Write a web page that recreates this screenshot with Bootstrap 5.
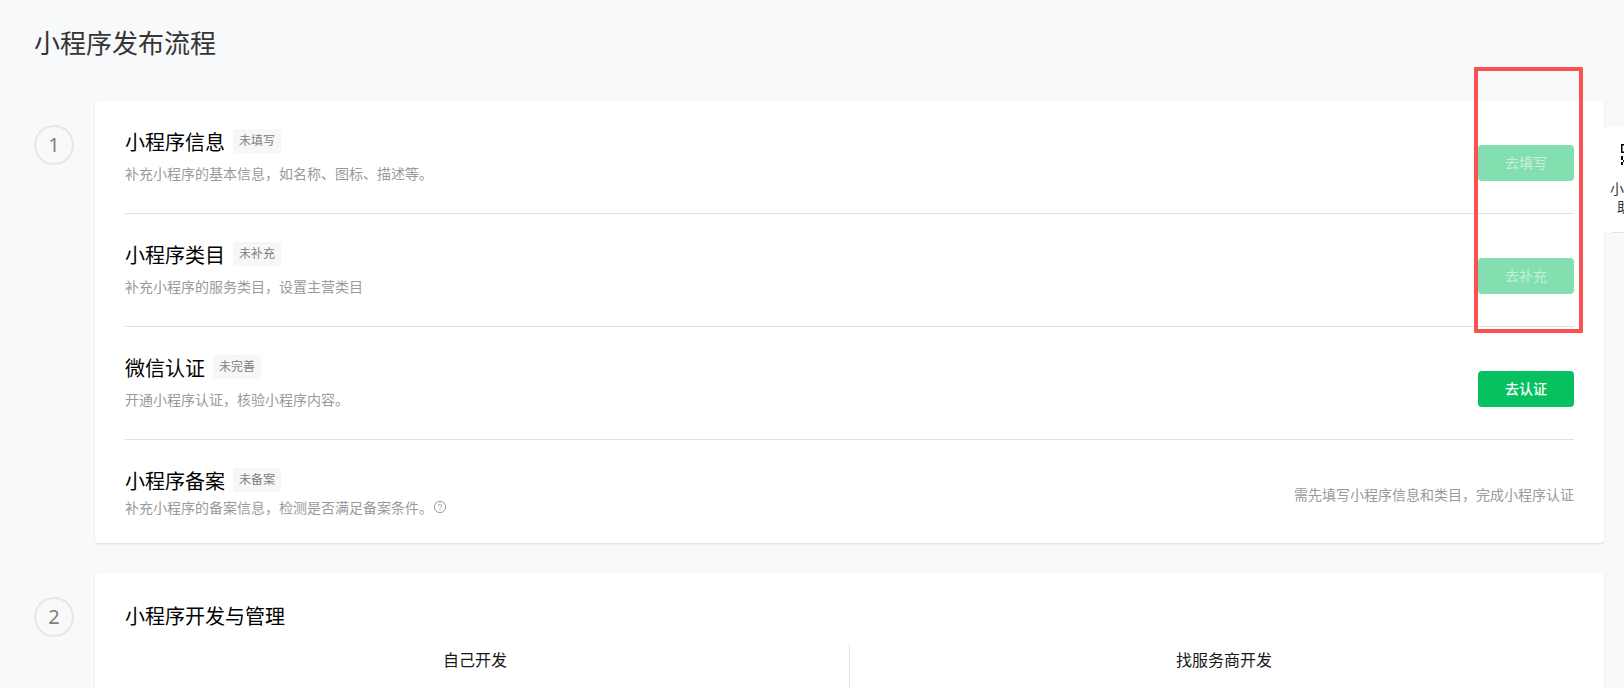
<!DOCTYPE html>
<html lang="zh-CN">
<head>
<meta charset="utf-8">
<meta name="viewport" content="width=device-width, initial-scale=1">
<title>小程序发布流程</title>
<link href="https://cdn.jsdelivr.net/npm/bootstrap@5.3.0/dist/css/bootstrap.min.css" rel="stylesheet">
<style>
  body { background: #f8f9fb; color: #000; font: 14px/20px "Noto Sans CJK SC", sans-serif; }
  .page { padding: 24px 20px 0 34px; }
  .page-title { font-size: 26px; line-height: 36px; color: #353535; font-weight: 400; margin: 0 0 41px; }
  .step { gap: 21px; }
  .step + .step { margin-top: 30px; }
  .step-num { width: 40px; height: 40px; margin-top: 24px; border: 2px solid #e7e7e8; color: #7d7e80; font: 20px/24px "Noto Sans", sans-serif; }
  .panel { min-width: 0; background: #fff; border-radius: 4px; box-shadow: 0 1px 2px rgba(0,0,0,.12); padding: 0 30px; }
  .task { height: 113px; padding-top: 27px; border-bottom: 1px solid #e0e2e3; }
  .task-last { height: 103px; border-bottom: 0; }
  .task-title { font-size: 20px; line-height: 28px; font-weight: 400; margin: 0; }
  .tag { font-size: 12px; line-height: 22px; margin-top: 1px; padding: 0 6px 2px; background: #f6f7f9; color: #7e8081; border-radius: 2px; }
  .hint { color: #9a9a9a; }
  .task .hint-row { margin-top: 7px; }
  .task-last .hint-row { margin-top: 2px; }
  .btn-go { --bs-btn-color: #fff; --bs-btn-bg: #07c160; --bs-btn-border-width: 0; --bs-btn-hover-color: #fff; --bs-btn-hover-bg: #06ad56; --bs-btn-active-bg: #06ad56; --bs-btn-active-color: #fff;
    --bs-btn-disabled-color: #c5f0d8; --bs-btn-disabled-bg: #83dfaf; --bs-btn-disabled-opacity: 1;
    width: 96px; height: 36px; padding: 0 0 2px; font-size: 14px; font-weight: 500; border-radius: 4px; margin-top: 17px; }
  .btn-go:disabled { font-weight: 400; }
  .note { margin-top: 17px; }
  .highlight { position: absolute; top: -34px; right: 21px; width: 109px; height: 266px; border: 4px solid #fa5151; border-radius: 1px; pointer-events: none; }
  .dev-title { padding-top: 29px; }
  .dev { margin-top: 15px; gap: 24px; min-height: 43px; }
  .dev-col { font-size: 16px; line-height: 28px; color: #181818; }
  .dev-line { width: 1px; background: #e0e2e3; }
  .helper { position: fixed; top: 127px; right: -34px; width: 54px; height: 106px; padding: 17px 0 0; background: #fff; color: #353535; line-height: 18px; text-decoration: none; }
  .helper svg { margin-bottom: 14px; }
  .helper-rule { height: 1px; margin: 17px 8px 0; background: #e0e2e3; }
</style>
</head>
<body>
<main class="page min-vh-100 d-flex flex-column">
  <h1 class="page-title">小程序发布流程</h1>

  <section class="step d-flex align-items-start">
    <div class="step-num rounded-circle flex-shrink-0 d-flex align-items-center justify-content-center">1</div>
    <div class="panel flex-grow-1 position-relative">
      <div class="task d-flex justify-content-between">
        <div>
          <div class="d-flex align-items-start gap-2"><h2 class="task-title">小程序信息</h2><span class="tag">未填写</span></div>
          <div class="hint hint-row">补充小程序的基本信息，如名称、图标、描述等。</div>
        </div>
        <button type="button" class="btn btn-go" disabled>去填写</button>
      </div>
      <div class="task d-flex justify-content-between">
        <div>
          <div class="d-flex align-items-start gap-2"><h2 class="task-title">小程序类目</h2><span class="tag">未补充</span></div>
          <div class="hint hint-row">补充小程序的服务类目，设置主营类目</div>
        </div>
        <button type="button" class="btn btn-go" disabled>去补充</button>
      </div>
      <div class="task d-flex justify-content-between">
        <div>
          <div class="d-flex align-items-start gap-2"><h2 class="task-title">微信认证</h2><span class="tag">未完善</span></div>
          <div class="hint hint-row">开通小程序认证，核验小程序内容。</div>
        </div>
        <button type="button" class="btn btn-go">去认证</button>
      </div>
      <div class="task task-last d-flex justify-content-between">
        <div>
          <div class="d-flex align-items-start gap-2"><h2 class="task-title">小程序备案</h2><span class="tag">未备案</span></div>
          <div class="hint hint-row d-flex align-items-center">补充小程序的备案信息，检测是否满足备案条件。
            <svg width="14" height="14" viewBox="0 0 14 14" fill="none" stroke="#9a9a9a" aria-hidden="true"><circle cx="7" cy="7" r="5.6"/><path d="M5.4 5.9a1.6 1.6 0 1 1 2.5 1.2c-.6.4-.9.6-.9 1.2M7 9.2v1"/></svg>
          </div>
        </div>
        <div class="hint note">需先填写小程序信息和类目，完成小程序认证</div>
      </div>
      <div class="highlight"></div>
    </div>
  </section>

  <section class="step d-flex flex-grow-1">
    <div class="step-num rounded-circle flex-shrink-0 d-flex align-items-center justify-content-center">2</div>
    <div class="panel rounded-bottom-0 flex-grow-1 d-flex flex-column">
      <h2 class="task-title dev-title">小程序开发与管理</h2>
      <div class="dev d-flex flex-grow-1 text-center">
        <div class="dev-col flex-fill w-50">自己开发</div>
        <div class="dev-line flex-shrink-0"></div>
        <div class="dev-col flex-fill w-50">找服务商开发</div>
      </div>
    </div>
  </section>
</main>

<a href="#" class="helper text-center">
  <svg class="d-block mx-auto" width="20" height="21" viewBox="0 0 20 21" aria-hidden="true">
    <path fill="none" stroke="#000" stroke-width="1.5" d="M.75.75h7.5v7.5H.75zM11.75.75h7.5v7.5h-7.5z"/>
    <path d="M0 12h2v4H0zM3 12h3v4H3zM7 12h2v2H7zM2 16h3v2H2zM0 18h2v3H0zM5 18h4v3H5zM11 12h4v4h-4zM16 15h4v3h-4zM12 18h3v3h-3z"/>
  </svg>
  小程序<br>助手
  <div class="helper-rule"></div>
</a>
<script src="https://cdn.jsdelivr.net/npm/bootstrap@5.3.0/dist/js/bootstrap.bundle.min.js"></script>
</body>
</html>
